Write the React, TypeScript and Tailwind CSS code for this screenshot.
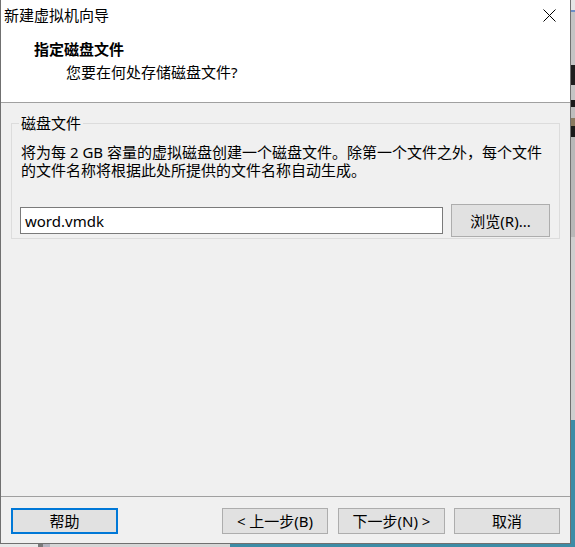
import React from "react";

const font = { fontFamily: '"Noto Sans", "Noto Sans CJK SC", sans-serif' };

function Btn({ children, w, primary }: { children: React.ReactNode; w: string; primary?: boolean }) {
  return (
    <div
      className={`${w} h-[26px] flex items-center justify-center bg-[#e1e1e1] text-[15px] leading-[18px] text-black ${
        primary ? "border-2 border-[#0078d7]" : "border border-[#adadad]"
      }`}
    >
      {children}
    </div>
  );
}

export default function App() {
  return (
    <div className="w-[575px] h-[547px] flex flex-col overflow-hidden bg-[#3d8ca6]" style={font}>
      <div className="flex h-[544px]">
        {/* dialog */}
        <div className="w-[571px] h-[544px] flex flex-col border-l border-r border-b border-[#707070] bg-[#f0f0f0]">
          {/* title bar */}
          <div className="h-[30px] flex items-center justify-between bg-white pl-[3px] pr-[14px]">
            <span className="text-[15px] leading-[18px] text-black">新建虚拟机向导</span>
            <svg width="13" height="13" viewBox="0 0 13 13" className="mt-[1px]">
              <path d="M0.5 0.5 L12.5 12.5 M12.5 0.5 L0.5 12.5" stroke="#000" strokeWidth="1" fill="none" />
            </svg>
          </div>
          {/* header */}
          <div className="h-[73px] flex flex-col bg-white border-b border-[#a0a0a0] pt-[9px]">
            <div className="pl-[33px] text-[15px] leading-[20px] font-bold text-black">指定磁盘文件</div>
            <div className="pl-[65px] mt-[3px] text-[15px] leading-[20px] text-black">您要在何处存储磁盘文件?</div>
          </div>
          {/* body */}
          <div className="h-[393px] flex flex-col">
            <div className="relative mt-[20px] ml-[10px] w-[549px] h-[116px] border border-[#dcdcdc] pt-[19px] pl-[8px] pr-[9px] pb-[1px] flex flex-col">
              <span className="absolute left-[7px] top-[-10px] px-[2px] bg-[#f0f0f0] text-[15px] leading-[18px] text-black">
                磁盘文件
              </span>
              <div className="pl-[1px] text-[15px] leading-[18px] text-black whitespace-nowrap">
                <div>将为每 2 GB 容量的虚拟磁盘创建一个磁盘文件。除第一个文件之外，每个文件</div>
                <div>的文件名称将根据此处所提供的文件名称自动生成。</div>
              </div>
              <div className="mt-[25px] h-[33px] flex items-center gap-[8px]">
                <div className="w-[423px] h-[27px] flex items-center bg-white border border-[#7a7a7a] pl-[4px] text-[15px] leading-[18px] text-black">
                  word.vmdk
                </div>
                <div className="w-[99px] h-[33px] flex items-center justify-center bg-[#e1e1e1] border border-[#adadad] text-[15px] leading-[18px] text-black">
                  浏览(R)...
                </div>
              </div>
            </div>
          </div>
          {/* footer */}
          <div className="h-[47px] border-t border-[#a0a0a0] flex items-start pt-[11px] pl-[10px] pr-[10px]">
            <Btn w="w-[107px]" primary>
              帮助
            </Btn>
            <div className="ml-auto flex">
              <Btn w="w-[106px]">&lt; 上一步(B)</Btn>
              <div className="ml-[10px]">
                <Btn w="w-[107px]">下一步(N) &gt;</Btn>
              </div>
              <div className="ml-[9px]">
                <Btn w="w-[106px]">取消</Btn>
              </div>
            </div>
          </div>
        </div>
        {/* background strip on the right */}
        <div className="w-[4px] flex flex-col">
          <div className="h-[10px] bg-[#e6e6e6]" />
          <div className="h-[2px] bg-[#6c8fc8]" />
          <div className="h-[53px] bg-[#c4c4c4]" />
          <div className="h-[20px] bg-[#1e1e1e]" />
          <div className="h-[15px] bg-[#c4c4c4]" />
          <div className="h-[7px] bg-[#1a1a1a]" />
          <div className="h-[11px] bg-[#bdbdbd]" />
          <div className="h-[8px] bg-[#8a7a60]" />
          <div className="h-[11px] bg-[#1a1a1a]" />
          <div className="h-[100px] bg-[#b8b8b8]" />
          <div className="h-[183px] bg-[#cfcfcf]" />
          <div className="flex-1 bg-[#3d8ca6]" />
        </div>
      </div>
      {/* background strip at the bottom */}
      <div className="h-[3px] flex">
        <div className="w-[38px] bg-[#e8e8e8]" />
        <div className="w-[5px] bg-[#7a7a7a]" />
        <div className="w-[7px] bg-[#b4b4c0]" />
        <div className="w-[180px] bg-[#d6d6d6]" />
        <div className="flex-1 bg-[#3d8ca6]" />
      </div>
    </div>
  );
}
